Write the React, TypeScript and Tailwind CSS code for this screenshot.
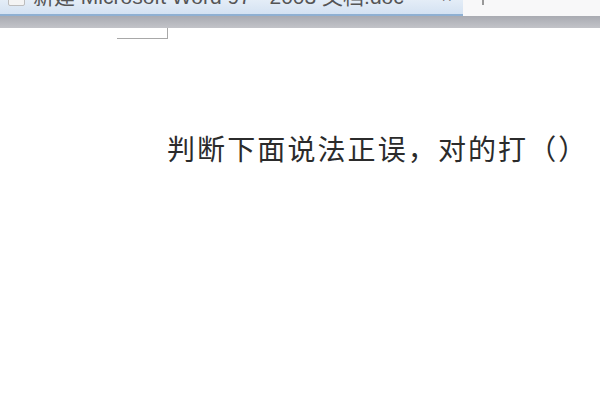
export default function App() {
	return (
		<div className="flex h-[400px] w-[600px] flex-col overflow-hidden bg-white [font-family:'Liberation_Sans','Noto_Sans_CJK_SC',sans-serif]">
			{/* browser tab strip, cut off by the top of the picture */}
			<div className="flex h-[16px] shrink-0 bg-[#f8f8f9]">
				<div className="flex h-[16px] w-[463px] shrink-0 items-end overflow-hidden border-b-2 border-[#8fb0d2] bg-gradient-to-b from-[#e4edf7] to-[#d4e2f2] pl-[8px]">
					<div className="mb-[8px] h-[16px] w-[17px] shrink-0 rounded-[2px] border border-[#bdbdbd] bg-[#f4f4f4]" />
					<span className="mb-[5px] ml-[8px] whitespace-nowrap text-[21px] leading-[24px] text-[#555]">
						新建 Microsoft Word 97 - 2003 文档.doc
					</span>
					<span className="mb-[8px] ml-auto mr-[11px] text-[18px] leading-[18px] text-[#555]">×</span>
				</div>
				<div className="flex flex-1 items-end pl-[19px]">
					<div className="mb-[11px] h-[6px] w-[2px] bg-[#999]" />
				</div>
			</div>

			{/* gray band above the page */}
			<div className="h-[12px] shrink-0 bg-gradient-to-b from-[#a9abb2] to-[#c2c3c8]" />

			{/* page margin corner */}
			<div className="ml-[117px] h-[11px] w-[51px] shrink-0 border-b border-r border-[#a8a8a8]" />

			<div className="mt-[94px] pl-[167px]">
				<p className="whitespace-nowrap text-[28px] leading-[36px] tracking-[2.1px] text-[#2b2b2b] [text-spacing-trim:space-all]">
					判断下面说法正误，对的打（）
				</p>
			</div>
		</div>
	);
}
